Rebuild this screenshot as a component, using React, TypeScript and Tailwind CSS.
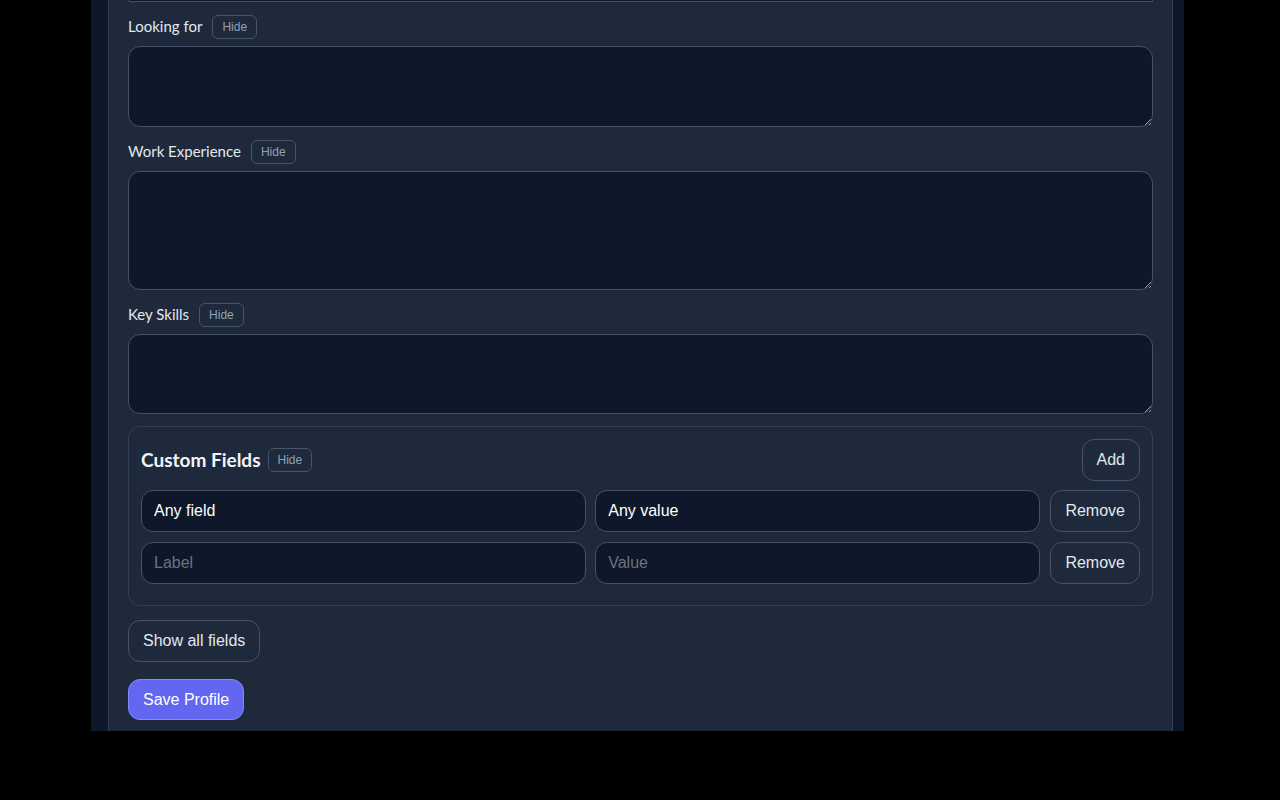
const label = "font-['Lato','Liberation_Sans',sans-serif] text-[15px] text-slate-200";
const hideBtn =
  "h-[24px] px-[9px] rounded-md border border-[#475569] text-[12px] text-slate-400 font-['Liberation_Sans',Arial,sans-serif]";
const area =
  "block w-full rounded-xl border border-[#45536a] bg-[#0f172a] text-slate-100 p-3 outline-none";
const input =
  "h-[42px] w-full rounded-xl border border-[#45536a] bg-[#0f172a] px-3 text-[16px] text-white placeholder:text-[#6b7280] outline-none font-['Liberation_Sans',Arial,sans-serif]";
const ghostBtn =
  "h-[42px] rounded-xl border border-[#45536a] bg-[#1e293b] px-[14px] text-[16px] text-slate-200 font-['Liberation_Sans',Arial,sans-serif]";

const FieldLabel = ({ text }: { text: string }) => (
  <div className="flex items-center gap-[10px] h-[25px]">
    <span className={label}>{text}</span>
    <button className={hideBtn}>Hide</button>
  </div>
);

const TextField = ({ text, height }: { text: string; height: string }) => (
  <div className="flex flex-col gap-[7px]">
    <FieldLabel text={text} />
    <textarea className={`${area} ${height}`} />
  </div>
);

export default function App() {
  return (
    <div className="min-h-[800px] bg-black">
      <div className="ml-[91px] w-[1093px] h-[731px] bg-[#0f172a] overflow-hidden">
        <div className="ml-[17px] w-[1065px] h-full bg-[#1e293b] border-x border-[#334155] px-[19px]">
          {/* tail of the field above */}
          <div className="h-[2px] rounded-b-xl border-x border-b border-[#45536a] bg-[#0f172a]" />

          <div className="mt-[12px] flex flex-col gap-[12px]">
            <TextField text="Looking for" height="h-[81px]" />
            <TextField text="Work Experience" height="h-[119px]" />
            <TextField text="Key Skills" height="h-[80px]" />

            <div className="h-[180px] rounded-xl border border-[#334155] px-[12px] pt-[12px]">
              <div className="flex items-center justify-between">
                <div className="flex items-center gap-[7px]">
                  <span className="font-['Lato','Liberation_Sans',sans-serif] text-[19px] font-bold text-slate-100">
                    Custom Fields
                  </span>
                  <button className={hideBtn}>Hide</button>
                </div>
                <button className={ghostBtn}>Add</button>
              </div>
              <div className="mt-[9px] flex flex-col gap-[10px]">
                <div className="flex gap-[9px]">
                  <input className={input} defaultValue="Any field" />
                  <input className={input} defaultValue="Any value" />
                  <button className={`${ghostBtn} ml-px shrink-0`}>Remove</button>
                </div>
                <div className="flex gap-[9px]">
                  <input className={`${input} h-[41px]`} placeholder="Label" />
                  <input className={`${input} h-[41px]`} placeholder="Value" />
                  <button className={`${ghostBtn} ml-px h-[41px] shrink-0`}>Remove</button>
                </div>
              </div>
            </div>
          </div>

          <button className={`${ghostBtn} h-[41px] mt-[14px] block`}>Show all fields</button>
          <button className="mt-[17px] block h-[41px] rounded-xl border border-[#818cf8] bg-[#6366f1] px-[14px] text-[16px] text-white font-['Liberation_Sans',Arial,sans-serif]">
            Save Profile
          </button>
        </div>
      </div>
    </div>
  );
}
